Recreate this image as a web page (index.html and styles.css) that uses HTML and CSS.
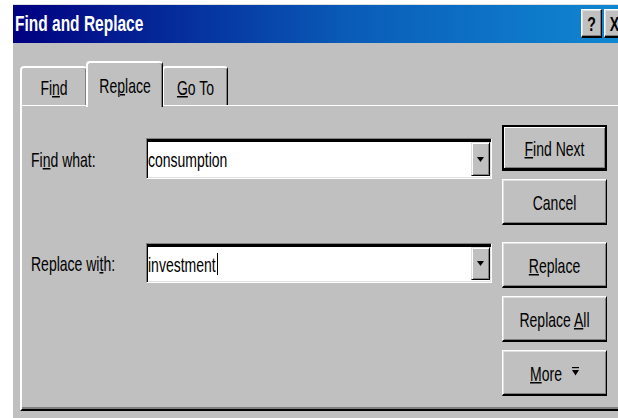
FILE: index.html
```html
<!DOCTYPE html>
<html lang="en">
<head>
<meta charset="utf-8">
<title>Find and Replace</title>
<link rel="stylesheet" href="styles.css">
</head>
<body>
<div class="dialog">
  <div class="titlebar">
    <span class="title"><span class="t">Find and Replace</span></span>
    <div class="caption-btns">
      <span class="cap-btn"><span class="t">?</span></span>
      <span class="cap-btn"><span class="t">X</span></span>
    </div>
  </div>

  <div class="tabs">
    <div class="tab"><span class="t">Fi<u>n</u>d</span></div>
    <div class="tab active"><span class="t">Re<u>p</u>lace</span></div>
    <div class="tab"><span class="t"><u>G</u>o To</span></div>
  </div>

  <div class="panel">
    <div class="form">
      <div class="row">
        <label class="label"><span class="t">Fi<u>n</u>d what:</span></label>
        <div class="combo">
          <div class="field"><span class="t">consumption</span></div>
          <span class="drop">
            <svg width="7" height="5" viewBox="0 0 7 5"><path d="M0 0H7L3.5 5Z" fill="#000"/></svg>
          </span>
        </div>
      </div>
      <div class="row second">
        <label class="label"><span class="t">Replace wi<u>t</u>h:</span></label>
        <div class="combo">
          <div class="field"><span class="t">investment</span><span class="caret"></span></div>
          <span class="drop">
            <svg width="7" height="5" viewBox="0 0 7 5"><path d="M0 0H7L3.5 5Z" fill="#000"/></svg>
          </span>
        </div>
      </div>
    </div>

    <div class="buttons">
      <button class="btn default"><span class="t"><u>F</u>ind Next</span></button>
      <button class="btn"><span class="t">Cancel</span></button>
      <button class="btn spaced"><span class="t"><u>R</u>eplace</span></button>
      <button class="btn"><span class="t">Replace <u>A</u>ll</span></button>
      <button class="btn"><span class="t"><u>M</u>ore</span>
        <svg class="more-ico" width="7" height="9" viewBox="0 0 7 9"><path d="M0 0.5H7" stroke="#000" stroke-width="1.4"/><path d="M0 3H7L3.5 8.5Z" fill="#000"/></svg>
      </button>
    </div>
  </div>
</div>
</body>
</html>
```

FILE: styles.css
```css
html, body {
  margin: 0;
  padding: 0;
  background: #ffffff;
  overflow: hidden;
  width: 618px;
  height: 418px;
}

body {
  font-family: "Liberation Sans", Arial, sans-serif;
  font-size: 14px;
  color: #000;
}

/* classic dialog text is tall and narrow */
.t {
  display: inline-block;
  transform: scaleY(1.5);
  white-space: nowrap;
}

u {
  text-decoration-thickness: 1px;
  text-underline-offset: 1px;
}

.dialog {
  margin: 4px 0 0 13px;
  width: 614px;
  height: 430px;
  background: #c0c0c0;
  border-top: 1px solid #dfdfdf;
}

/* ---------- caption ---------- */
.titlebar {
  height: 38px;
  display: flex;
  align-items: center;
  justify-content: space-between;
  background: linear-gradient(to right, #000080 0%, #0a5cb8 55%, #1088d2 100%);
  color: #fff;
}

.title {
  padding-left: 2px;
  font-weight: bold;
  font-size: 15.5px;
  line-height: 1;
}

.title .t {
  transform: scaleY(1.45);
}

.caption-btns {
  display: flex;
  gap: 2px;
  padding-right: 2px;
  align-self: flex-start;
  margin-top: 4px;
}

.cap-btn {
  width: 21px;
  height: 29px;
  box-sizing: border-box;
  background: #c0c0c0;
  color: #000;
  font-weight: bold;
  font-size: 14px;
  display: flex;
  align-items: center;
  justify-content: center;
  border-top: 1px solid #fff;
  border-left: 1px solid #fff;
  border-right: 1px solid #000;
  border-bottom: 2px solid #000;
  box-shadow: inset -1px -1px 0 #808080, inset 1px 1px 0 #dfdfdf;
}

/* ---------- tabs ---------- */
.tabs {
  display: flex;
  align-items: flex-end;
  margin: 17px 0 0 7px;
  height: 45px;
}

.tab {
  height: 39px;
  box-sizing: border-box;
  padding: 0 20px;
  display: flex;
  align-items: center;
  justify-content: center;
  border-top: 2px solid #fff;
  border-left: 2px solid #fff;
  border-right: 1px solid #000;
  border-radius: 4px 4px 0 0;
  box-shadow: inset -1px 0 0 #808080;
}

.tab:first-child {
  width: 67px;
}

.tab:last-child {
  width: 66px;
}

.tab.active {
  position: relative;
  z-index: 1;
  height: 46px;
  width: 77px;
  margin: 0 -1px -2px -1px;
  padding-bottom: 1px;
  background: #c0c0c0;
}

/* ---------- panel ---------- */
.panel {
  margin-left: 7px;
  width: 620px;
  height: 306px;
  box-sizing: border-box;
  display: flex;
  border-top: 1px solid #fff;
  border-left: 2px solid #fff;
  border-bottom: 2px solid #000;
  box-shadow: inset 0 -2px 0 #808080;
}

.form {
  padding: 32px 0 0 9px;
  display: flex;
  flex-direction: column;
}

.row {
  display: flex;
  align-items: center;
  height: 41px;
}

.row.second {
  margin-top: 64px;
  height: 40px;
}

.label {
  width: 115px;
}

.combo {
  width: 346px;
  height: 100%;
  box-sizing: border-box;
  display: flex;
  align-items: stretch;
  background: #fff;
  border-top: 1px solid #808080;
  border-left: 1px solid #808080;
  border-right: 1px solid #fff;
  border-bottom: 1px solid #fff;
  box-shadow: inset 1px 3px 0 #000, inset -1px -1px 0 #dfdfdf;
  padding: 3px 1px 2px 1px;
}

.field {
  flex: 1;
  display: flex;
  align-items: center;
  padding-left: 0;
}

.caret {
  display: inline-block;
  width: 1px;
  height: 22px;
  background: #000;
  margin-left: 1px;
}

.drop {
  width: 19px;
  box-sizing: border-box;
  background: #c0c0c0;
  display: flex;
  align-items: center;
  justify-content: center;
  border-top: 1px solid #dfdfdf;
  border-left: 1px solid #dfdfdf;
  border-right: 1px solid #000;
  border-bottom: 1px solid #000;
  box-shadow: inset 1px 1px 0 #fff, inset -1px -1px 0 #808080;
}

/* ---------- command buttons ---------- */
.buttons {
  margin-left: 10px;
  padding-top: 19px;
  display: flex;
  flex-direction: column;
  gap: 8px;
}

.btn {
  width: 105px;
  height: 46px;
  box-sizing: border-box;
  margin: 0;
  padding: 0;
  font: inherit;
  color: #000;
  background: #c0c0c0;
  display: flex;
  align-items: center;
  justify-content: center;
  gap: 10px;
  border-top: 1px solid #fff;
  border-left: 1px solid #fff;
  border-right: 1px solid #000;
  border-bottom: 2px solid #000;
  box-shadow: inset 1px 1px 0 #dfdfdf, inset -1px -1px 0 #808080;
}

.btn.default {
  border: 2px solid #000;
  border-bottom-width: 3px;
  box-shadow: inset 1px 1px 0 #fff, inset -1px -1px 0 #808080;
}

.btn.spaced {
  margin-top: 9px;
}

.more-ico {
  margin-top: -2px;
}
```
